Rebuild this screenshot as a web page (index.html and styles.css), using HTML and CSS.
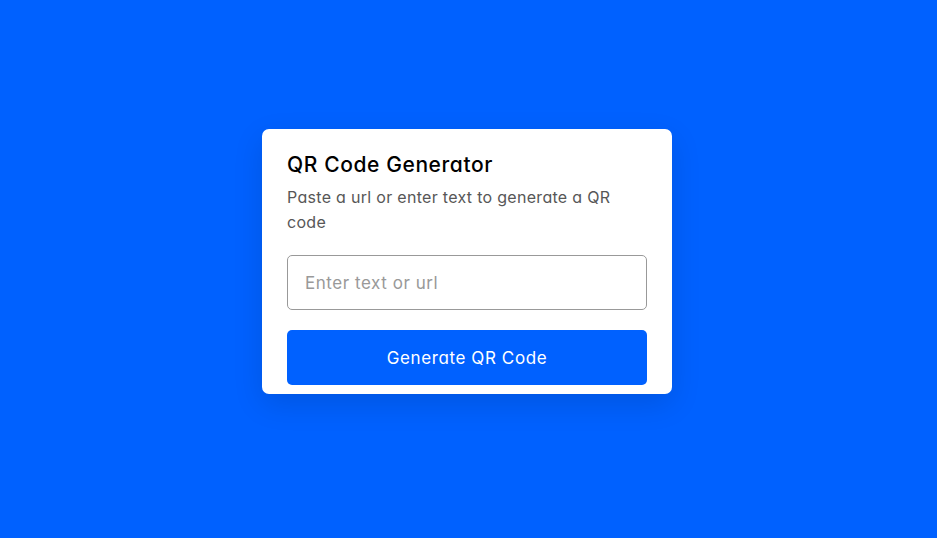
FILE: index.html
```html
<!DOCTYPE html>
<html lang="en">
<head>
<meta charset="utf-8">
<title>QR Code Generator</title>
<link rel="stylesheet" href="styles.css">
</head>
<body>
<div class="wrapper">
  <header class="header">
    <h1 class="title">QR Code Generator</h1>
    <p class="subtitle">Paste a url or enter text to generate a QR code</p>
  </header>
  <div class="form">
    <input class="field" type="text" placeholder="Enter text or url">
    <button class="btn" type="button">Generate QR Code</button>
  </div>
</div>
</body>
</html>
```
FILE: styles.css
```css
* { box-sizing: border-box; margin: 0; padding: 0; }
html, body { height: 100%; }
body {
  background: #0061ff;
  font-family: "Inter", "Open Sans", sans-serif;
  font-feature-settings: "cv11" 1, "ss02" 0;
  display: flex;
  justify-content: center;
  align-items: flex-start;
  padding-top: 129px;
  padding-right: 3px;
}
.wrapper {
  width: 410px;
  height: 265px;
  background: #fff;
  border-radius: 7px;
  padding: 21px 25px 0;
  box-shadow: 0 10px 30px rgba(0, 0, 0, 0.12);
  overflow: hidden;
}
.title {
  font-size: 21px;
  font-weight: 500;
  line-height: 30px;
  letter-spacing: 0.6px;
  color: #000;
}
.subtitle {
  margin-top: 5px;
  font-size: 16px;
  line-height: 25px;
  letter-spacing: 0.3px;
  color: #575757;
  max-width: 340px;
}
.form {
  margin-top: 20px;
  display: flex;
  flex-direction: column;
  gap: 20px;
}
.field {
  height: 55px;
  width: 100%;
  border: 1px solid #999;
  border-radius: 5px;
  padding: 0 17px;
  font-family: inherit;
  font-feature-settings: inherit;
  font-size: 17px;
  letter-spacing: 0.55px;
  outline: none;
}
.field::placeholder { color: #999; }
.btn {
  height: 55px;
  width: 100%;
  border: none;
  border-radius: 5px;
  background: #0061ff;
  color: #fff;
  font-family: inherit;
  font-feature-settings: inherit;
  font-size: 17px;
  letter-spacing: 0.6px;
  cursor: pointer;
}
```
